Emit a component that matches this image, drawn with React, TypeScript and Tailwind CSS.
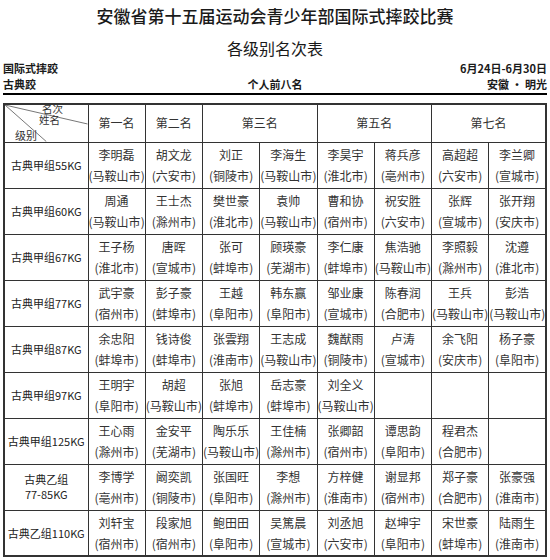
import React from "react"

type Entry = [string, string] | null

const rows: { label: React.ReactNode; items: Entry[] }[] = [
  {
    label: "古典甲组55KG",
    items: [
      ["李明磊", "马鞍山市"], ["胡文龙", "六安市"], ["刘正", "铜陵市"], ["李海生", "马鞍山市"],
      ["李昊宇", "淮北市"], ["蒋兵彦", "亳州市"], ["高超超", "六安市"], ["李兰卿", "宣城市"],
    ],
  },
  {
    label: "古典甲组60KG",
    items: [
      ["周通", "马鞍山市"], ["王士杰", "滁州市"], ["樊世豪", "淮北市"], ["袁帅", "马鞍山市"],
      ["曹和协", "宿州市"], ["祝安胜", "六安市"], ["张辉", "宣城市"], ["张开翔", "安庆市"],
    ],
  },
  {
    label: "古典甲组67KG",
    items: [
      ["王子杨", "淮北市"], ["唐晖", "宣城市"], ["张可", "蚌埠市"], ["顾瑛豪", "芜湖市"],
      ["李仁康", "蚌埠市"], ["焦浩驰", "马鞍山市"], ["李照毅", "滁州市"], ["沈遵", "淮北市"],
    ],
  },
  {
    label: "古典甲组77KG",
    items: [
      ["武宇豪", "宿州市"], ["彭子豪", "蚌埠市"], ["王越", "阜阳市"], ["韩东赢", "阜阳市"],
      ["邹业康", "宣城市"], ["陈春润", "合肥市"], ["王兵", "马鞍山市"], ["彭浩", "马鞍山市"],
    ],
  },
  {
    label: "古典甲组87KG",
    items: [
      ["余忠阳", "蚌埠市"], ["钱诗俊", "蚌埠市"], ["张雲翔", "淮南市"], ["王志成", "马鞍山市"],
      ["魏猷雨", "铜陵市"], ["卢涛", "宣城市"], ["余飞阳", "安庆市"], ["杨子豪", "阜阳市"],
    ],
  },
  {
    label: "古典甲组97KG",
    items: [
      ["王明宇", "阜阳市"], ["胡超", "马鞍山市"], ["张旭", "蚌埠市"], ["岳志豪", "蚌埠市"],
      ["刘全义", "马鞍山市"], null, null, null,
    ],
  },
  {
    label: "古典甲组125KG",
    items: [
      ["王心雨", "滁州市"], ["金安平", "芜湖市"], ["陶乐乐", "马鞍山市"], ["王佳楠", "滁州市"],
      ["张卿韶", "宿州市"], ["谭思韵", "阜阳市"], ["程君杰", "合肥市"], null,
    ],
  },
  {
    label: (
      <span className="block leading-[15px]">
        古典乙组
        <br />
        77-85KG
      </span>
    ),
    items: [
      ["李博学", "亳州市"], ["阚奕凯", "铜陵市"], ["张国旺", "阜阳市"], ["李想", "滁州市"],
      ["方梓健", "淮南市"], ["谢显邦", "宿州市"], ["郑子豪", "合肥市"], ["张豪强", "淮南市"],
    ],
  },
  {
    label: "古典乙组110KG",
    items: [
      ["刘轩宝", "宿州市"], ["段家旭", "宿州市"], ["鲍田田", "阜阳市"], ["吴篤晨", "宣城市"],
      ["刘丞旭", "六安市"], ["赵坤宇", "阜阳市"], ["宋世豪", "蚌埠市"], ["陆雨生", "淮南市"],
    ],
  },
]

function HeadCorner() {
  return (
    <th className="relative border border-[#333] p-0 font-normal">
      <svg className="absolute inset-0 h-full w-full" preserveAspectRatio="none" viewBox="0 0 100 100">
        <line x1="0" y1="0" x2="100" y2="52" stroke="#777" strokeWidth="1" vectorEffect="non-scaling-stroke" />
        <line x1="0" y1="0" x2="50" y2="100" stroke="#777" strokeWidth="1" vectorEffect="non-scaling-stroke" />
      </svg>
      <span className="absolute left-[37px] top-[-1px] text-[10.5px] leading-[10px]">名次</span>
      <span className="absolute left-[34px] top-[10px] text-[10.5px] leading-[10px]">姓名</span>
      <span className="absolute bottom-[1px] left-[10px] text-[11px] leading-[11px]">级别</span>
    </th>
  )
}

export default function App() {
  return (
    <div className="h-[560px] w-[550px] overflow-hidden bg-white px-[3px] font-['Noto_Sans_CJK_SC',sans-serif] text-[#1a1a1a]">
      <h1 className="pt-[5px] text-center text-[17px] font-medium leading-[22px]">安徽省第十五届运动会青少年部国际式摔跤比赛</h1>
      <h2 className="mt-[10px] text-center text-[16px] leading-[22px]">各级别名次表</h2>

      <div className="mt-[1px] grid grid-cols-3 text-[11px] font-bold leading-[16px]">
        <div>国际式摔跤</div>
        <div />
        <div className="text-right">6月24日-6月30日</div>
        <div>古典跤</div>
        <div className="text-center">个人前八名</div>
        <div className="text-right">安徽 · 明光</div>
      </div>
      <div className="mt-[1px] h-[2px] bg-black" />

      <table className="mt-[8px] w-[544px] table-fixed border-collapse border-2 border-[#333] text-center text-[12px] text-[#333]">
        <colgroup>
          <col className="w-[84px]" />
          <col />
          <col />
          <col />
          <col />
          <col />
          <col />
          <col />
          <col />
        </colgroup>
        <thead>
          <tr className="h-[38px]">
            <HeadCorner />
            <th className="border border-[#333] font-normal">第一名</th>
            <th className="border border-[#333] font-normal">第二名</th>
            <th colSpan={2} className="border border-[#333] font-normal">第三名</th>
            <th colSpan={2} className="border border-[#333] font-normal">第五名</th>
            <th colSpan={2} className="border border-[#333] font-normal">第七名</th>
          </tr>
        </thead>
        <tbody>
          {rows.map((r, i) => (
            <tr key={i} className="h-[46px]">
              <td className="overflow-hidden whitespace-nowrap border border-[#333] p-0 text-[11px] text-[#222]">{r.label}</td>
              {r.items.map((e, j) => (
                <td key={j} className="whitespace-nowrap border border-[#333] p-0 leading-[21px]">
                  {e && (
                    <>
                      <div>{e[0]}</div>
                      <div>({e[1]})</div>
                    </>
                  )}
                </td>
              ))}
            </tr>
          ))}
        </tbody>
      </table>
    </div>
  )
}
